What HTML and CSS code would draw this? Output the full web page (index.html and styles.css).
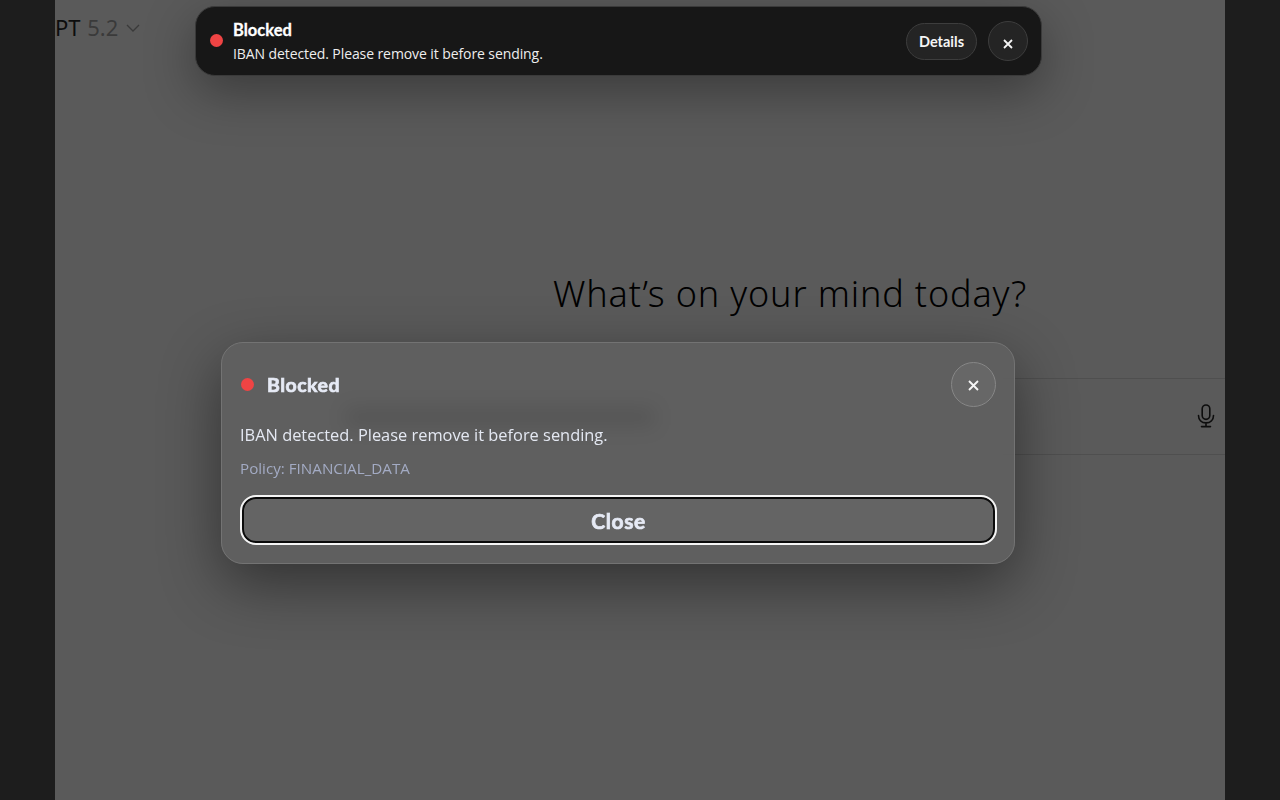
FILE: index.html
```html
<!DOCTYPE html>
<html lang="en">
<head>
<meta charset="utf-8">
<title>Blocked</title>
<link rel="stylesheet" href="styles.css">
</head>
<body>
<div class="app">
  <aside class="rail"></aside>
  <main class="main">
    <header class="topbar">
      <span class="model">PT <span class="ver">5.2</span></span>
      <svg class="chev" width="14" height="8" viewBox="0 0 14 8"><path d="M1 1l6 6 6-6" fill="none" stroke="#3a3a3a" stroke-width="1.3"/></svg>
    </header>
    <h1 class="headline">What’s on your mind today?</h1>
    <div class="composer">
      <div class="composer-ghost"></div>
      <svg class="mic" width="20" height="24" viewBox="0 0 20 24" fill="none" stroke="#0d0d0d" stroke-width="1.6" stroke-linecap="round"><rect x="6.2" y="1" width="7.6" height="14.4" rx="3.8"/><path d="M2.5 11.5c0 4.6 3.2 7.4 7.5 7.4s7.5-2.800 7.500-7.400M10 19v3.200M5.500 22.600h9"/></svg>
    </div>
  </main>
  <aside class="rail"></aside>
</div>

<section class="toast">
  <span class="dot toast-dot"></span>
  <div class="toast-text">
    <div class="toast-title">Blocked</div>
    <div class="toast-msg">IBAN detected. Please remove it before sending.</div>
  </div>
  <button class="pill">Details</button>
  <button class="round toast-x"><svg width="10" height="10" viewBox="0 0 10 10"><path d="M1 1l8 8M9 1l-8 8" stroke="#f5f5f5" stroke-width="1.800" fill="none"/></svg></button>
</section>

<section class="modal">
  <div class="modal-head">
    <span class="dot modal-dot"></span>
    <span class="modal-title">Blocked</span>
    <button class="round modal-x"><svg width="11" height="11" viewBox="0 0 11 11"><path d="M1 1l9 9M10 1l-9 9" stroke="#f5f5f5" stroke-width="1.900" fill="none"/></svg></button>
  </div>
  <p class="modal-msg">IBAN detected. Please remove it before sending.</p>
  <p class="modal-policy">Policy: FINANCIAL_DATA</p>
  <button class="close-btn">Close</button>
</section>
</body>
</html>
```
FILE: styles.css
```css
* { box-sizing: border-box; }
html, body { margin: 0; height: 100%; overflow: hidden; }
body { font-family: "Open Sans", "Noto Sans", sans-serif; background: #1d1d1d; }

.app { display: flex; height: 800px; }
.rail { width: 55px; background: #1d1d1d; flex: none; }
.main { flex: 1; background: #5a5a5a; display: flex; flex-direction: column; align-items: flex-end; overflow: hidden; }

.topbar { align-self: flex-start; display: flex; align-items: center; gap: 8px; height: 55px; padding-bottom: 1px; color: #0d0d0d; font-size: 22px; font-family: "Noto Sans", sans-serif; }
.ver { color: #3a3a3a; margin-left: 1px; }
.chev { margin-top: 1px; }

.headline { align-self: flex-start; margin: 215px 0 0 498px; font-family: "Noto Sans", sans-serif; font-weight: 300; font-size: 36px; letter-spacing: .85px; line-height: 48px; color: #000; white-space: nowrap; }

.composer { margin-top: 60px; width: 900px; height: 77px; border-top: 1px solid #4f4f4f; border-bottom: 1px solid #4f4f4f; display: flex; align-items: center; justify-content: space-between; padding: 0 9px 0 20px; }
.composer-ghost { width: 310px; height: 18px; background: #262626; }
.mic { margin-top: -2px; }

.toast { position: absolute; left: 195px; top: 6px; width: 847px; height: 70px; border-radius: 20px; background: #171717; border: 1px solid #3a3a3a; display: flex; align-items: center; padding: 0 13px 0 14px; box-shadow: 0 16px 50px rgba(0,0,0,.35); }
.dot { flex: none; border-radius: 50%; background: #ef4444; }
.toast-dot { width: 13px; height: 13px; margin-top: -1px; }
.toast-text { flex: 1; margin: 2px 0 0 10px; color: #fff; }
.toast-title { font-family: Lato, sans-serif; font-weight: 700; font-size: 16.500px; line-height: 22px; -webkit-text-stroke: .3px currentColor; margin-top: 1px; }
.toast-msg { font-size: 14px; line-height: 25px; color: #eee; letter-spacing: -.09px; }
.pill { width: 71px; height: 37px; border-radius: 19px; background: #242424; border: 1px solid #3d3d3d; color: #f5f5f5; font-family: Lato, sans-serif; font-weight: 700; font-size: 14.500px; padding: 0; }
.round { display: flex; align-items: center; justify-content: center; border-radius: 50%; padding: 0; flex: none; }
.toast-x { width: 40px; height: 40px; margin-left: 11px; background: #242424; border: 1px solid #3d3d3d; padding-top: 5px; }

.modal { position: absolute; left: 221px; top: 342px; width: 794px; height: 222px; border-radius: 22px; background: rgba(96,96,96,.8); -webkit-backdrop-filter: blur(10px); backdrop-filter: blur(10px); border: 1px solid #737373; padding: 19px 17px 19px 18px; box-shadow: 0 20px 60px rgba(0,0,0,.45); }
.modal-head { display: flex; align-items: center; height: 45px; }
.modal-dot { width: 13px; height: 13px; margin-left: 1px; margin-top: -1px; }
.modal-title { flex: 1; margin-left: 13px; font-family: Lato, sans-serif; font-weight: 700; font-size: 19.500px; letter-spacing: .5px; -webkit-text-stroke: .7px currentColor; color: #e6eaf5; margin-top: -1px; }
.modal-x { width: 45px; height: 45px; background: #676767; border: 1px solid #878787; padding-top: 2px; margin-right: 1px; }
.modal-msg { margin: 16px 0 0; font-size: 16.400px; line-height: 24px; color: #e4e8f2; }
.modal-policy { margin: 10px 0 0; font-size: 15.200px; line-height: 22px; color: #a3abc4; }
.close-btn { display: block; width: 100%; height: 50px; margin-top: 16px; border-radius: 16px; background: #646464; border: 2px solid #f4f4f4; box-shadow: inset 0 0 0 2px #0a0a0a; color: #e6eaf5; font-family: Lato, sans-serif; font-weight: 700; font-size: 21px; letter-spacing: .6px; -webkit-text-stroke: .7px currentColor; padding: 0; }
```
